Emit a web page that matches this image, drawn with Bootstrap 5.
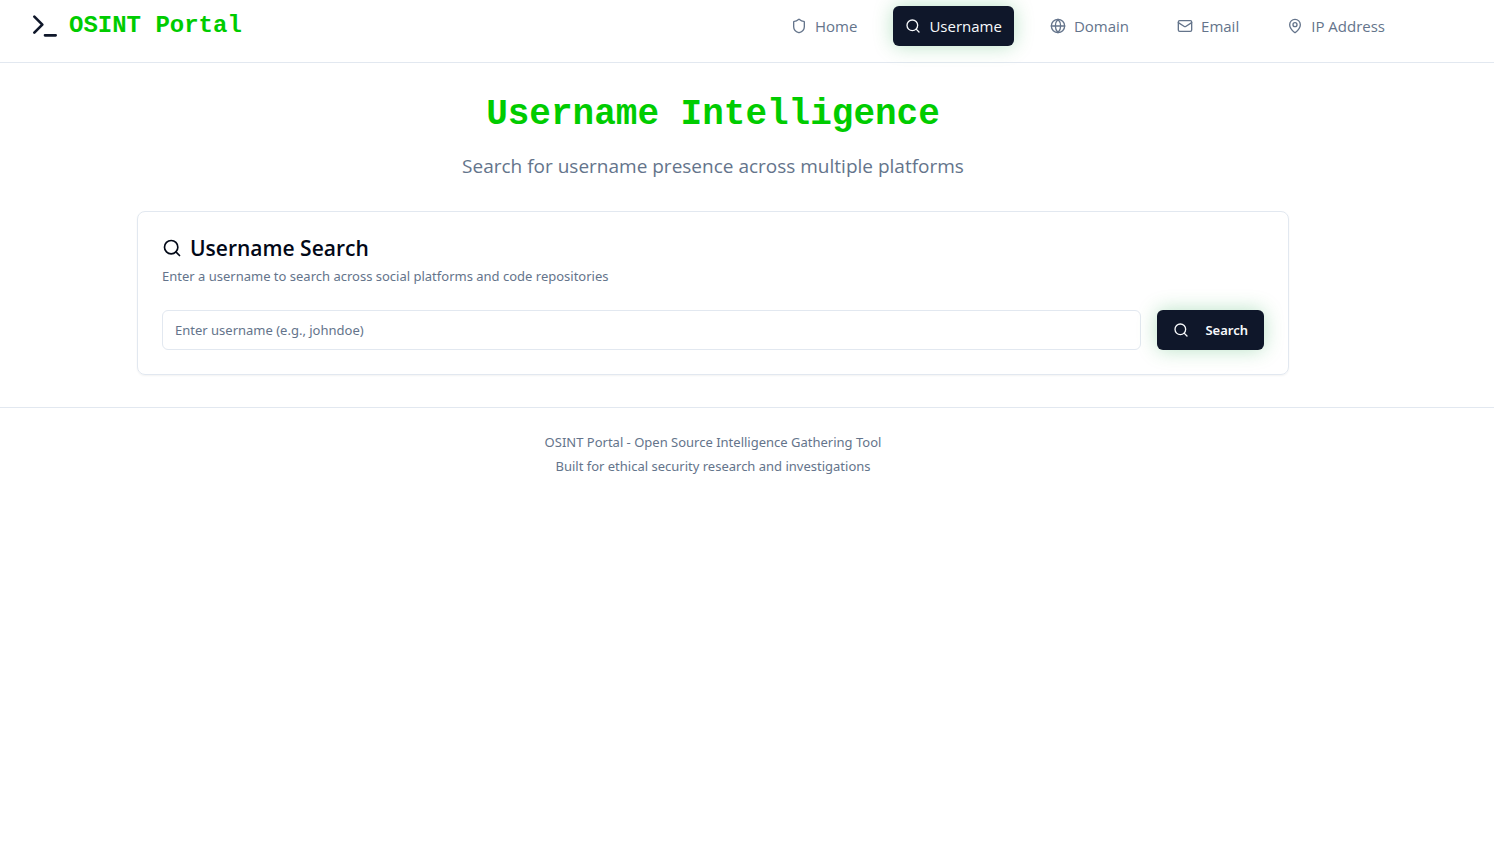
<!DOCTYPE html>
<html lang="en">
<head>
<meta charset="utf-8">
<meta name="viewport" content="width=device-width, initial-scale=1">
<title>OSINT Portal - Username Intelligence</title>
<link href="https://cdn.jsdelivr.net/npm/bootstrap@5.3.0/dist/css/bootstrap.min.css" rel="stylesheet">
<style>
  :root { --ink: #0f172a; --muted: #64748b; --line: #e2e8f0; --neon: #00cc00; }
  body { font-family: "Segoe UI", "Open Sans", "Noto Sans", sans-serif; color: #020817; background: #fff; }
  .shell { max-width: 1400px; padding-left: 16px; padding-right: 16px; }
  .tool-panel { max-width: 1152px; padding: 32px 0; }
  .icon { flex: none; fill: none; stroke: currentColor; stroke-width: 2; stroke-linecap: round; stroke-linejoin: round; }
  .text-soft { color: var(--muted); }
  .rule-bottom { border-bottom: 1px solid var(--line); }
  .rule-top { border-top: 1px solid var(--line); }
  .site-header { padding-top: 6px; padding-bottom: 16px; }
  .brand { font: 700 24px/32px "Courier New", "Liberation Mono", monospace; color: var(--neon); }
  .brand .icon { color: var(--ink); }
  .site-nav { column-gap: 24px; }
  .site-nav .nav-link { height: 40px; padding: 0 12px; border-radius: 6px; font-size: 15px; color: var(--muted); }
  .site-nav .nav-link.active, .btn-glow { background: var(--ink); color: #f8fafc; box-shadow: 0 0 20px rgba(0, 153, 51, .28); }
  .site-nav .nav-link.active { font-weight: 500; }
  .page-title { font: 700 36px/40px "Courier New", "Liberation Mono", monospace; color: var(--neon); }
  .page-lead { font-size: 19px; line-height: 30px; }
  .search-card { margin-top: 30px; border: 1px solid var(--line); border-radius: 8px; box-shadow: 0 1px 2px rgba(0, 0, 0, .05); }
  .card-heading { font-size: 21px; font-weight: 600; line-height: 24px; margin-bottom: 6px; }
  .fine { font-family: "Segoe UI", "Noto Sans", sans-serif; font-size: 13px; line-height: 20px; }
  .search-box { height: 40px; padding: 8px 12px; border-color: var(--line); border-radius: 6px; }
  .search-box::placeholder { color: var(--muted); }
  .btn-glow { height: 40px; padding: 0 16px; border: 0; border-radius: 6px; font-weight: 600; }
  .btn-glow:hover { background: #1e293b; color: #f8fafc; }
  @media (min-width: 1200px) { .page { padding-right: 68px; } .bleed { margin-right: -68px; padding-right: 68px; } }
</style>
</head>
<body>
<div class="page">
  <header class="bleed rule-bottom site-header">
    <div class="shell mx-auto d-flex flex-wrap align-items-center justify-content-between">
      <a class="brand d-flex align-items-center gap-2 text-decoration-none" href="#">
        <svg class="icon" width="32" height="32" viewBox="0 0 24 24" aria-hidden="true"><path d="m4 17 6-6-6-6M12 19h8"/></svg>
        <span>OSINT Portal</span>
      </a>
      <nav class="site-nav nav" aria-label="Main">
        <a class="nav-link d-flex align-items-center gap-2" href="#">
          <svg class="icon" width="16" height="16" viewBox="0 0 24 24" aria-hidden="true"><path d="M20 13c0 5-3.500 7.500-7.660 8.950a1 1 0 0 1-.67-.01C7.500 20.500 4 18 4 13V6a1 1 0 0 1 1-1c2 0 4.500-1.200 6.240-2.720a1.170 1.170 0 0 1 1.520 0C14.510 3.810 17 5 19 5a1 1 0 0 1 1 1z"/></svg>
          Home</a>
        <a class="nav-link active d-flex align-items-center gap-2" aria-current="page" href="#">
          <svg class="icon" width="16" height="16" viewBox="0 0 24 24" aria-hidden="true"><circle cx="11" cy="11" r="8"/><path d="m21 21-4.300-4.300"/></svg>
          Username</a>
        <a class="nav-link d-flex align-items-center gap-2" href="#">
          <svg class="icon" width="16" height="16" viewBox="0 0 24 24" aria-hidden="true"><circle cx="12" cy="12" r="10"/><path d="M12 2a14.500 14.500 0 0 0 0 20 14.500 14.500 0 0 0 0-20M2 12h20"/></svg>
          Domain</a>
        <a class="nav-link d-flex align-items-center gap-2" href="#">
          <svg class="icon" width="16" height="16" viewBox="0 0 24 24" aria-hidden="true"><rect width="20" height="16" x="2" y="4" rx="2"/><path d="m22 7-8.970 5.700a1.940 1.940 0 0 1-2.060 0L2 7"/></svg>
          Email</a>
        <a class="nav-link d-flex align-items-center gap-2" href="#">
          <svg class="icon" width="16" height="16" viewBox="0 0 24 24" aria-hidden="true"><path d="M20 10c0 4.993-5.539 10.193-7.399 11.799a1 1 0 0 1-1.202 0C9.539 20.193 4 14.993 4 10a8 8 0 0 1 16 0"/><circle cx="12" cy="10" r="3"/></svg>
          IP Address</a>
      </nav>
    </div>
  </header>

  <main class="shell mx-auto">
    <div class="tool-panel mx-auto">
      <div class="text-center">
        <h1 class="page-title mb-3">Username Intelligence</h1>
        <p class="page-lead text-soft mb-0">Search for username presence across multiple platforms</p>
      </div>
      <section class="search-card p-4">
        <h2 class="card-heading d-flex align-items-center gap-2">
          <svg class="icon" width="20" height="20" viewBox="0 0 24 24" aria-hidden="true"><circle cx="11" cy="11" r="8"/><path d="m21 21-4.300-4.300"/></svg>
          Username Search</h2>
        <label class="d-block fine text-soft mb-4" for="username">Enter a username to search across social platforms and code repositories</label>
        <form class="d-flex gap-3">
          <input class="form-control search-box fine" id="username" type="text" placeholder="Enter username (e.g., johndoe)">
          <button class="btn btn-glow fine d-flex align-items-center gap-3" type="button">
            <svg class="icon" width="16" height="16" viewBox="0 0 24 24" aria-hidden="true"><circle cx="11" cy="11" r="8"/><path d="m21 21-4.300-4.300"/></svg>
            Search</button>
        </form>
      </section>
    </div>
  </main>

  <footer class="bleed rule-top">
    <div class="shell mx-auto py-4 text-center text-soft fine">
      <p class="mb-1">OSINT Portal - Open Source Intelligence Gathering Tool</p>
      <p class="mb-0">Built for ethical security research and investigations</p>
    </div>
  </footer>
</div>
<script src="https://cdn.jsdelivr.net/npm/bootstrap@5.3.0/dist/js/bootstrap.bundle.min.js"></script>
</body>
</html>
